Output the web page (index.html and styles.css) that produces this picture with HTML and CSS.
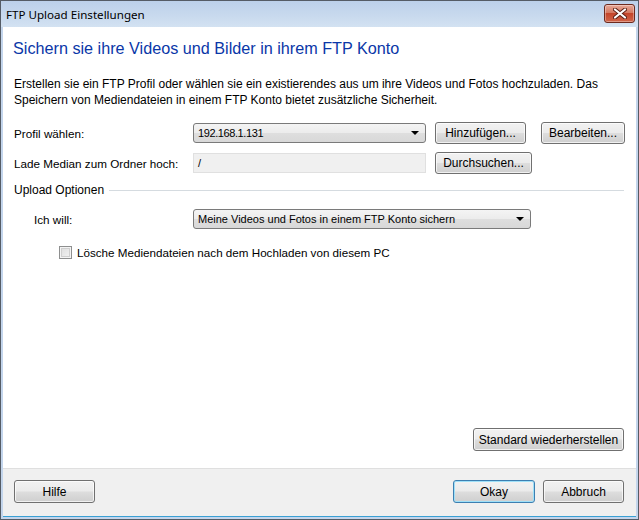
FILE: index.html
```html
<!DOCTYPE html>
<html>
<head>
<meta charset="utf-8">
<link rel="stylesheet" href="styles.css">
</head>
<body>
<div class="window">
  <div class="titlebar">
    <span class="title">FTP Upload Einstellungen</span>
    <span class="close"><svg width="14" height="11" viewBox="0 0 14 11"><path d="M2 1.5 L12 9.5 M12 1.5 L2 9.5" stroke="#5a1f14" stroke-width="4" stroke-linecap="round"/><path d="M2 1.5 L12 9.5 M12 1.5 L2 9.5" stroke="#ffffff" stroke-width="2.2" stroke-linecap="round"/></svg></span>
  </div>
  <div class="frame">
    <div class="main">
      <h1 class="heading">Sichern sie ihre Videos und Bilder in ihrem FTP Konto</h1>
      <p class="intro">Erstellen sie ein FTP Profil oder wählen sie ein existierendes aus um ihre Videos und Fotos hochzuladen. Das Speichern von Mediendateien in einem FTP Konto bietet zusätzliche Sicherheit.</p>
      <div class="form">
        <div class="row">
          <span class="label">Profil wählen:</span>
          <div class="combo combo-short"><span class="ip">192.168.1.131</span><i class="arrow"></i></div>
          <button class="btn btn-add">Hinzufügen...</button>
          <button class="btn btn-edit">Bearbeiten...</button>
        </div>
        <div class="row">
          <span class="label">Lade Median zum Ordner hoch:</span>
          <div class="textbox">/</div>
          <button class="btn btn-browse">Durchsuchen...</button>
        </div>
      </div>
      <div class="group">
        <span>Upload Optionen</span>
        <span class="rule"></span>
      </div>
      <div class="row row-want">
        <span class="label label-indent">Ich will:</span>
        <div class="combo combo-long"><span>Meine Videos und Fotos in einem FTP Konto sichern</span><i class="arrow"></i></div>
      </div>
      <label class="check">
        <span class="box"></span>
        <span>Lösche Mediendateien nach dem Hochladen von diesem PC</span>
      </label>
      <div class="reset">
        <button class="btn btn-reset">Standard wiederherstellen</button>
      </div>
    </div>
    <div class="footer">
      <button class="btn btn-foot">Hilfe</button>
      <div class="foot-right">
        <button class="btn btn-foot btn-default">Okay</button>
        <button class="btn btn-foot">Abbruch</button>
      </div>
    </div>
  </div>
</div>
</body>
</html>
```
FILE: styles.css
```css
* { box-sizing: border-box; }
html, body { margin: 0; padding: 0; }
body {
  width: 639px;
  height: 520px;
  overflow: hidden;
  font-family: "Liberation Sans", Arial, sans-serif;
  font-size: 12px;
  color: #000;
  background: #fff;
}
.window {
  width: 639px;
  height: 520px;
  display: flex;
  flex-direction: column;
  border: 1px solid #555c66;
  background: #c3d5ec;
}
.titlebar {
  height: 26px;
  display: flex;
  align-items: flex-start;
  background: linear-gradient(#bcd0ea, #c9daee 60%, #d3e2f2);
  padding-left: 5px;
  padding-right: 3px;
}
.title {
  font-family: "Noto Sans", "DejaVu Sans", sans-serif;
  font-size: 11.6px;
  line-height: 16px;
  margin-top: 6px;
  color: #000;
}
.close {
  margin-left: auto;
  margin-top: 3px;
  width: 31px;
  height: 19px;
  border: 1px solid #6d2a1e;
  border-radius: 3px;
  background: linear-gradient(#e7a898, #d47a62 45%, #c4452a 50%, #d0654a);
  display: flex;
  align-items: center;
  justify-content: center;
  box-shadow: inset 0 0 0 1px rgba(255,255,255,0.35);
}
.close svg { display: block; }
.frame {
  flex: 1;
  display: flex;
  flex-direction: column;
  margin: 0 2px 2px 2px;
  background: #fff;
  border-bottom: 1px solid #3aa0d4;
}
.main {
  flex: 1;
  display: flex;
  flex-direction: column;
  padding: 0 12px 0 11px;
}
.heading {
  margin: 10px 0 0 -1px;
  font-weight: normal;
  font-size: 16.2px;
  line-height: 22px;
  color: #0a37a8;
}
.intro {
  margin: 17px 0 0 0;
  line-height: 16px;
}
.form {
  margin-top: 14px;
  display: flex;
  flex-direction: column;
  gap: 8px;
}
.row {
  display: flex;
  align-items: center;
  height: 22px;
}
.label {
  width: 179px;
  flex: none;
  font-size: 11.7px;
}
.label-indent {
  padding-left: 20px;
}
.combo {
  height: 20px;
  border: 1px solid #7a7a7a;
  border-radius: 3px;
  background: linear-gradient(#f4f4f4, #ececec 48%, #dedede 52%, #d8d8d8);
  display: flex;
  align-items: center;
  padding: 0 5px 0 4px;
  flex: none;
  font-size: 11px;
}
.combo span { flex: 1; }
.combo .ip { letter-spacing: -0.4px; }
.combo-short { width: 233px; }
.combo-long { width: 338px; }
.arrow {
  width: 0;
  height: 0;
  border-left: 4px solid transparent;
  border-right: 4px solid transparent;
  border-top: 4px solid #000;
  margin-right: 1px;
}
.textbox {
  width: 233px;
  height: 20px;
  flex: none;
  background: #f0f0f0;
  border: 1px solid #e0e0e0;
  padding: 0 4px;
  line-height: 18px;
  font-size: 11px;
}
.btn {
  font-family: "Liberation Sans", Arial, sans-serif;
  font-size: 12px;
  color: #000;
  height: 22px;
  border: 1px solid #707070;
  border-radius: 3px;
  background: linear-gradient(#f2f2f2, #ebebeb 48%, #dddddd 52%, #cfcfcf);
  box-shadow: inset 0 0 0 1px rgba(255,255,255,0.7);
  padding: 0;
  flex: none;
}
.btn-add { width: 91px; margin-left: 9px; }
.btn-edit { width: 84px; margin-left: 15px; }
.btn-browse { width: 97px; margin-left: 9px; }
.group {
  margin-top: 8px;
  display: flex;
  align-items: center;
  height: 16px;
}
.rule {
  flex: 1;
  height: 1px;
  background: #d5dbe0;
  margin-left: 5px;
}
.row-want {
  margin-top: 10px;
}
.check {
  margin-top: 14px;
  padding-left: 45px;
  display: flex;
  align-items: center;
  height: 16px;
  font-size: 11.65px;
}
.box {
  width: 13px;
  height: 13px;
  border: 1px solid #8e8f8f;
  background: linear-gradient(135deg, #dcdcdc, #f4f4f4);
  box-shadow: inset 0 0 0 1px #f4f4f4, inset 0 0 0 2px #cfcfcf;
  margin-right: 5px;
  flex: none;
}
.reset {
  margin-top: auto;
  margin-bottom: 17px;
  display: flex;
  justify-content: flex-end;
}
.btn-reset { width: 151px; height: 23px; }
.footer {
  height: 48px;
  background: #f0f0f0;
  border-top: 1px solid #dfdfdf;
  display: flex;
  justify-content: space-between;
  padding: 11px 12px 0 11px;
}
.foot-right {
  display: flex;
  gap: 8px;
}
.btn-foot { width: 81px; height: 23px; }
.btn-default {
  width: 82px;
  border-color: #3c7fb1;
  box-shadow: inset 0 0 0 1px #9fe0f8;
}
```
